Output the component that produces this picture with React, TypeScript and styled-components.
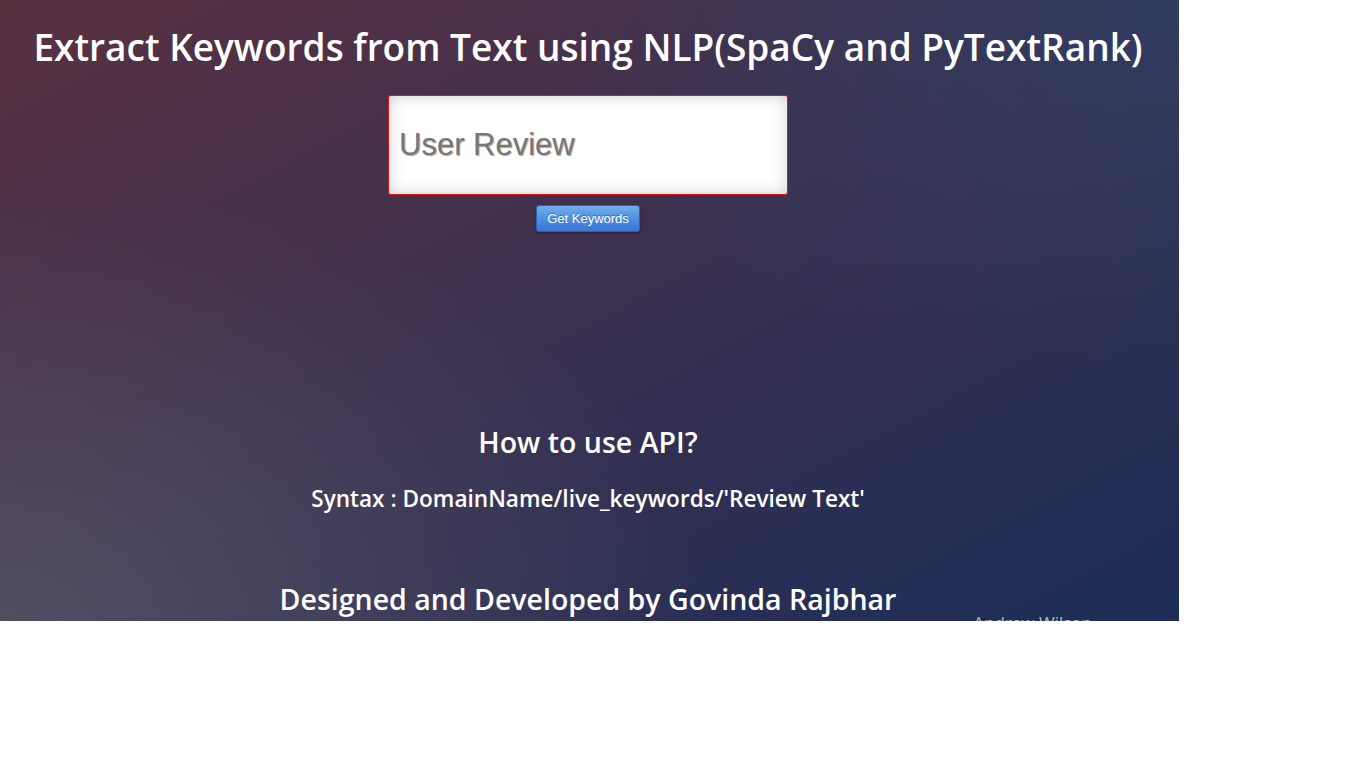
import React from "react";
import styled, { createGlobalStyle } from "styled-components";

const Global = createGlobalStyle`
  html, body { margin: 0; padding: 0; background: #ffffff; }
  body { font-family: "Open Sans", "Liberation Sans", sans-serif; }
`;

const Panel = styled.main`
  width: 1179px;
  height: 621px;
  overflow: hidden;
  box-sizing: border-box;
  padding-right: 3px;
  display: flex;
  flex-direction: column;
  align-items: center;
  color: #ffffff;
  background:
    radial-gradient(ellipse 60% 70% at 0% 100%, rgba(90, 88, 104, 0.75), rgba(90, 88, 104, 0) 100%),
    radial-gradient(ellipse 55% 60% at 100% 0%, rgba(45, 66, 104, 0.7), rgba(45, 66, 104, 0) 100%),
    linear-gradient(to bottom right, #5a3141 0%, #3b3050 48%, #1c2e58 100%);
`;

const Title = styled.h1`
  margin: 22px 0 0;
  font-size: 37px;
  font-weight: 600;
  line-height: 50px;
  white-space: nowrap;
`;

const Form = styled.form`
  display: flex;
  flex-direction: column;
  align-items: center;
  gap: 10px;
  margin-top: 23px;
`;

const ReviewBox = styled.textarea`
  width: 400px;
  height: 100px;
  box-sizing: border-box;
  border: 1px solid #ee1111;
  border-radius: 3px;
  background: #ffffff;
  box-shadow: inset 0 0 16px rgba(0, 0, 0, 0.18);
  padding: 31px 10px 0;
  resize: none;
  outline: none;
  font-family: "Liberation Sans", Arial, sans-serif;
  font-size: 31px;
  line-height: 36px;
  color: #555;
  text-shadow: 1px 1px 1px rgba(0, 0, 0, 0.35);
  &::placeholder {
    color: #777777;
    opacity: 1;
  }
`;

const Button = styled.button`
  width: 104px;
  height: 27px;
  box-sizing: border-box;
  border: 1px solid #2f62b0;
  border-radius: 3px;
  background: linear-gradient(to bottom, #72aeea 0%, #4d8ce0 55%, #3a77d2 100%);
  color: #ffffff;
  font-family: "Liberation Sans", Arial, sans-serif;
  font-size: 13px;
  padding: 0;
  text-shadow: 0 -1px 0 rgba(0, 0, 0, 0.3);
  box-shadow: 0 1px 2px rgba(0, 0, 0, 0.3);
  cursor: pointer;
`;

const Heading = styled.h2<{ $size: number; $top: number }>`
  margin: ${(p) => p.$top}px 0 0;
  font-size: ${(p) => p.$size}px;
  font-weight: 600;
  line-height: 1.3;
  white-space: nowrap;
  text-align: center;
`;

const Credit = styled.div`
  align-self: stretch;
  text-align: right;
  padding-right: 84px;
  margin-top: -7px;
  font-size: 17px;
  color: #b8b8c4;
`;

export default function App() {
  return (
    <>
      <Global />
      <Panel>
        <Title>Extract Keywords from Text using NLP(SpaCy and PyTextRank)</Title>
        <Form onSubmit={(e) => e.preventDefault()}>
          <ReviewBox placeholder="User Review" />
          <Button type="submit">Get Keywords</Button>
        </Form>
        <Heading $size={28.5} $top={192}>How to use API?</Heading>
        <Heading $size={22.6} $top={23}>Syntax : DomainName/live_keywords/'Review Text'</Heading>
        <Heading $size={28.5} $top={68}>Designed and Developed by Govinda Rajbhar</Heading>
        <Credit>Andrew Wilson</Credit>
      </Panel>
    </>
  );
}
